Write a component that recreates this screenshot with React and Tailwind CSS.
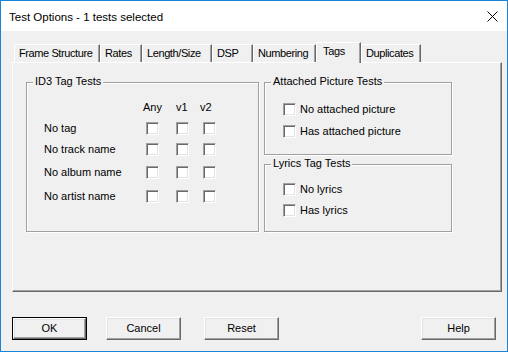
import React from "react";

const Check = () => (
  <div className="w-[13px] h-[13px] shrink-0 bg-white border border-t-[#a0a0a0] border-l-[#a0a0a0] border-b-white border-r-white shadow-[inset_1px_1px_0_#696969,inset_-1px_-1px_0_#e3e3e3]" />
);

const Tab = ({ label, w, active }) =>
  active ? (
    <div
      className="relative z-10 h-[21px] -mb-px bg-[#f0f0f0] border-l border-t border-l-white border-t-white border-r border-r-[#696969] shadow-[inset_-1px_0_0_#a0a0a0] pl-[6px] pt-[2px] leading-[13px] tracking-[-0.3px]"
      style={{ width: w }}
    >
      {label}
    </div>
  ) : (
    <div
      className="h-[18px] bg-[#f0f0f0] border-l border-t border-l-white border-t-white border-r border-r-[#696969] shadow-[inset_-1px_0_0_#a0a0a0] pl-[4px] pt-[2px] leading-[13px] whitespace-nowrap overflow-hidden tracking-[-0.4px]"
      style={{ width: w }}
    >
      {label}
    </div>
  );

const Group = ({ title, className, children }) => (
  <div
    className={`relative border border-[#a0a0a0] shadow-[inset_1px_1px_0_#fff,1px_1px_0_#fff] ${className}`}
  >
    <span className="absolute left-[6px] top-[-8px] bg-[#f0f0f0] px-[2px] leading-[13px] whitespace-nowrap">
      {title}
    </span>
    {children}
  </div>
);

const Btn = ({ label, def, className = "" }) => (
  <div
    className={`w-[75px] h-[23px] ${def ? "border border-black" : ""} ${className}`}
  >
    <div className="w-full h-full bg-[#f0f0f0] border border-t-white border-l-white border-b-[#696969] border-r-[#696969] shadow-[inset_-1px_-1px_0_#a0a0a0,inset_1px_1px_0_#e3e3e3] flex items-center justify-center leading-[13px]">
      {label}
    </div>
  </div>
);

const Row = ({ label, className = "" }) => (
  <div className={`flex items-center h-[13px] ${className}`}>
    <div className="w-[102px] leading-[13px] whitespace-nowrap">{label}</div>
    <Check />
    <div className="ml-[17px]">
      <Check />
    </div>
    <div className="ml-[14px]">
      <Check />
    </div>
  </div>
);

const CbRow = ({ label, className = "" }) => (
  <div className={`flex items-center h-[13px] ${className}`}>
    <Check />
    <span className="ml-[4px] leading-[13px] whitespace-nowrap">{label}</span>
  </div>
);

export default function App() {
  return (
    <div className="w-[508px] h-[352px] border border-[#1a84d6] bg-[#f0f0f0] flex flex-col font-['Liberation_Sans',Arial,sans-serif] text-[11px] text-black overflow-hidden">
      <div className="h-[30px] bg-white flex items-center justify-between pl-[8px] pr-[9px] shrink-0">
        <span className="text-[11.5px] leading-[14px] mt-[1px]">Test Options - 1 tests selected</span>
        <svg width="11" height="11" viewBox="0 0 11 11" className="mt-[1px]">
          <path d="M0.5 0.5 L10.5 10.5 M10.5 0.5 L0.5 10.5" stroke="#000" strokeWidth="1" />
        </svg>
      </div>
      <div className="flex flex-col pl-[11px] pr-[10px] pt-[11px]">
        <div className="flex items-end h-[20px] ml-[2px]">
          <Tab label="Frame Structure" w={86} />
          <Tab label="Rates" w={42} />
          <Tab label="Length/Size" w={70} />
          <Tab label="DSP" w={41} />
          <Tab label="Numbering" w={63} />
          <Tab label="Tags" w={45} active />
          <Tab label="Duplicates" w={60} />
        </div>
        <div className="w-[490px] h-[230px] border border-t-white border-l-white border-r-[#696969] border-b-[#696969] shadow-[inset_-1px_-1px_0_#a0a0a0] pl-[13px] pt-[19px] flex items-start">
          <Group title="ID3 Tag Tests" className="w-[233px] h-[150px] pl-[17px] pt-[18px]">
            <div className="flex h-[13px] leading-[13px]">
              <div className="w-[99px]" />
              <div className="w-[33px]">Any</div>
              <div className="w-[24px]">v1</div>
              <div>v2</div>
            </div>
            <Row label="No tag" className="mt-[8px]" />
            <Row label="No track name" className="mt-[8px]" />
            <Row label="No album name" className="mt-[10px]" />
            <Row label="No artist name" className="mt-[11px]" />
          </Group>
          <div className="ml-[5px] flex flex-col">
            <Group title="Attached Picture Tests" className="w-[188px] h-[73px] pl-[18px] pt-[20px]">
              <CbRow label="No attached picture" />
              <CbRow label="Has attached picture" className="mt-[9px]" />
            </Group>
            <Group title="Lyrics Tag Tests" className="w-[188px] h-[68px] mt-[9px] pl-[18px] pt-[18px]">
              <CbRow label="No lyrics" />
              <CbRow label="Has lyrics" className="mt-[8px]" />
            </Group>
          </div>
        </div>
        <div className="flex mt-[25px] pr-[1px]">
          <Btn label="OK" def />
          <Btn label="Cancel" className="ml-[19px]" />
          <Btn label="Reset" className="ml-[23px]" />
          <Btn label="Help" className="ml-auto" />
        </div>
      </div>
    </div>
  );
}
